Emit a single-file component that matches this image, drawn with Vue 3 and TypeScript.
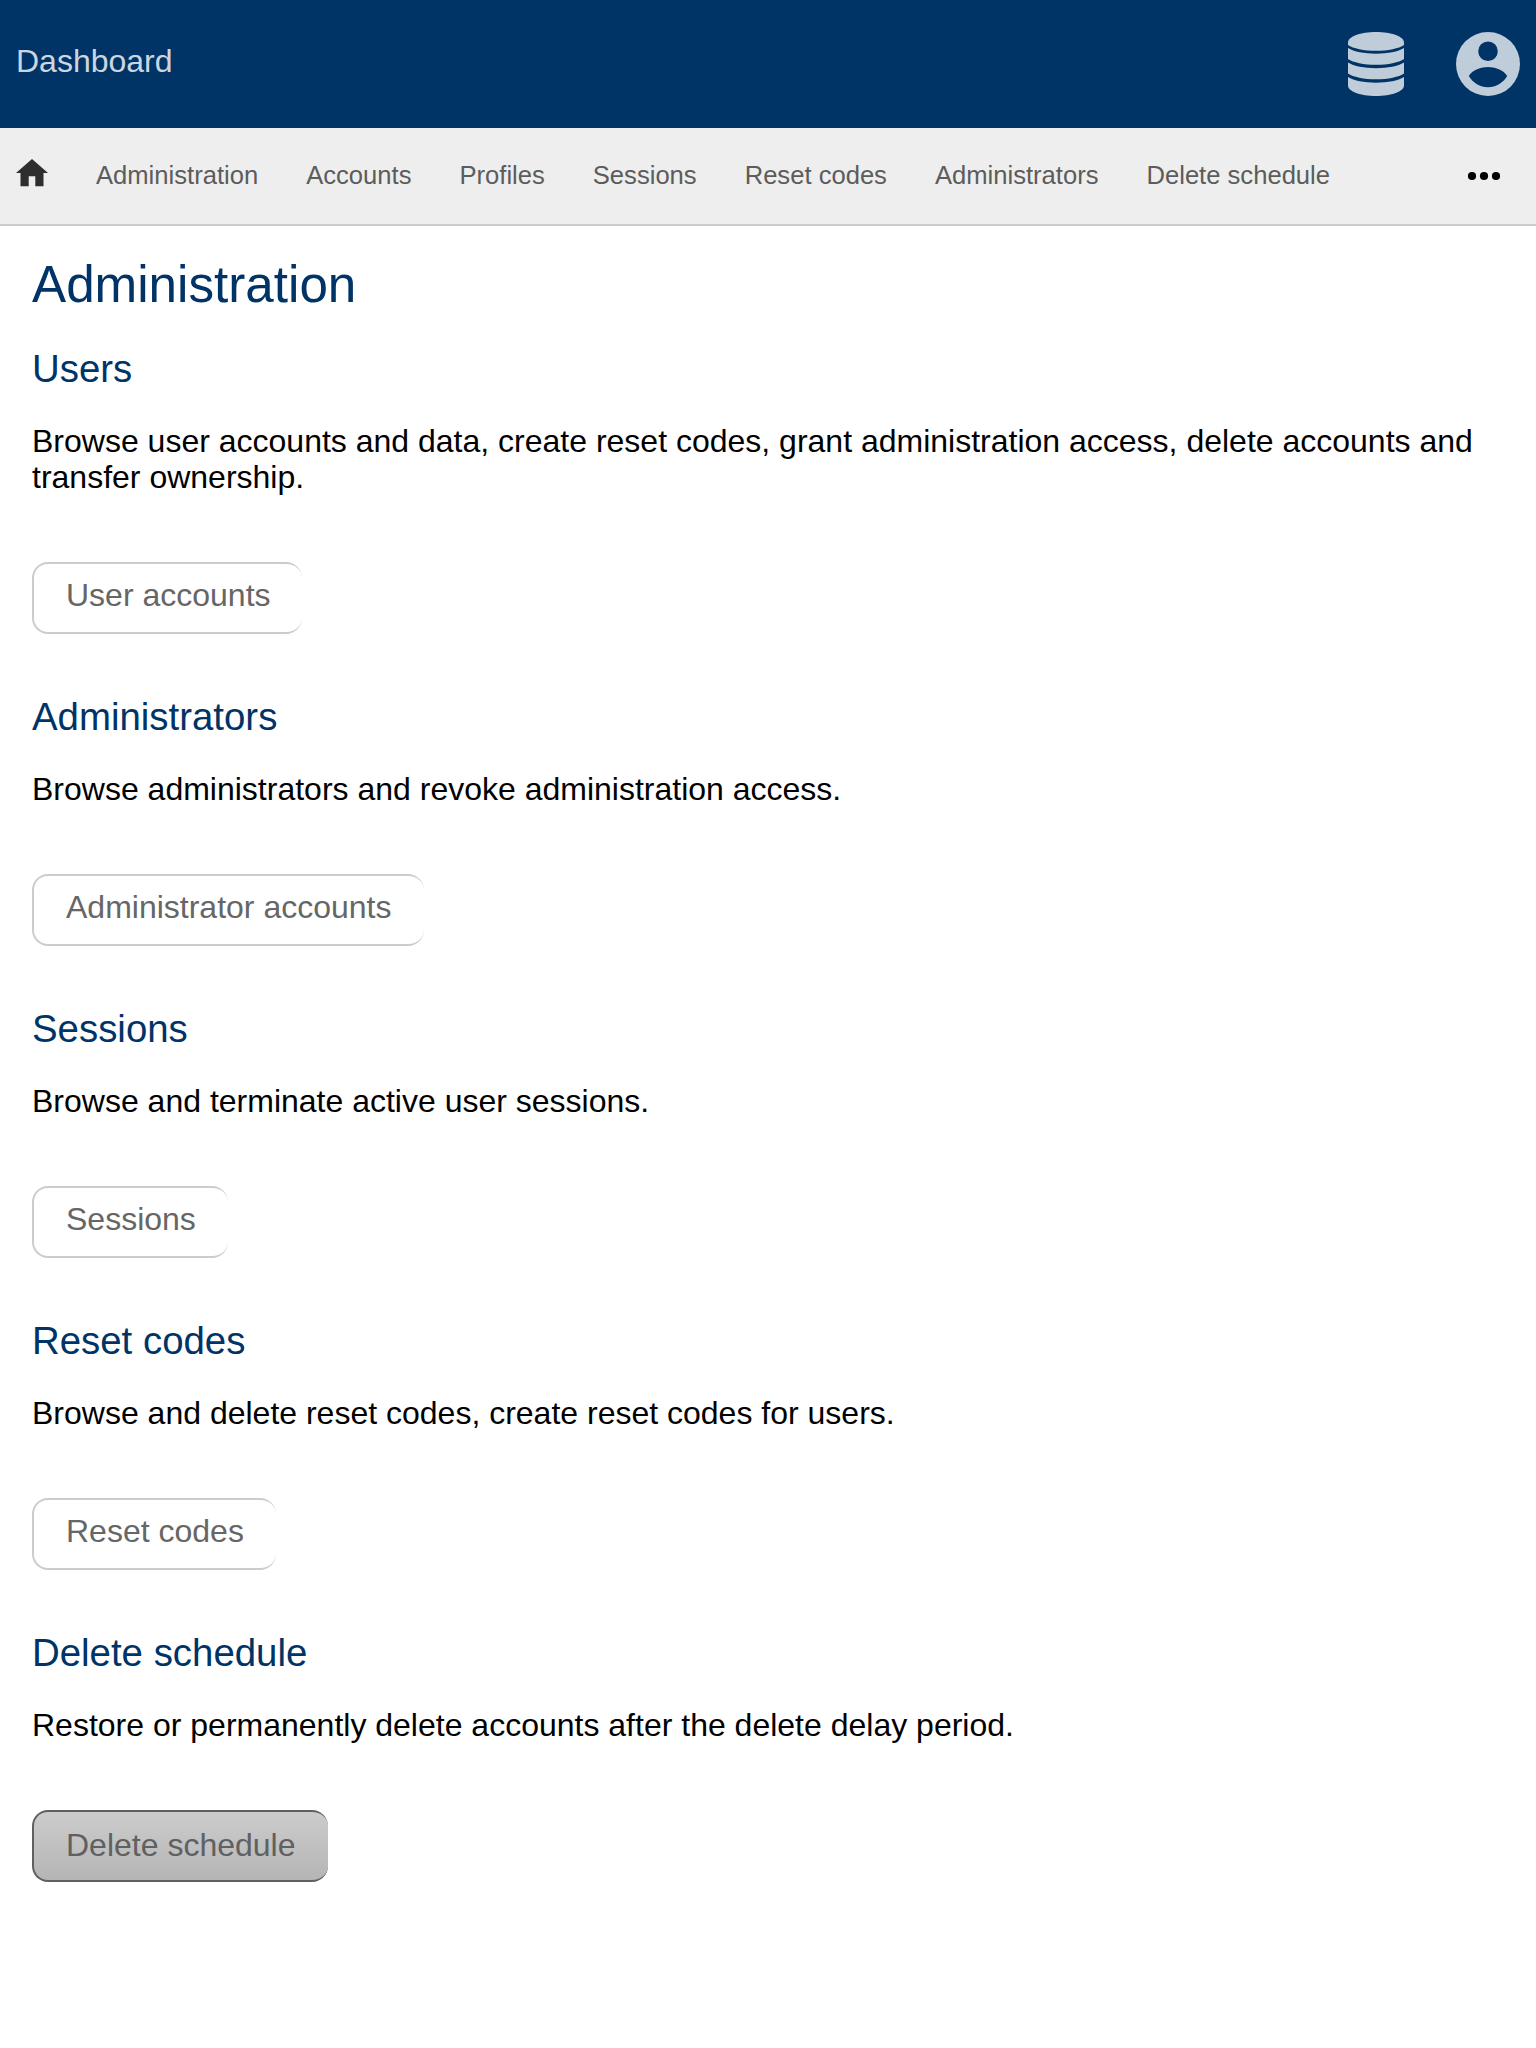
<script setup lang="ts">
interface Section {
  title: string
  text: string
  action: string
  width?: number
  pressed?: boolean
}

const links: string[] = [
  'Administration',
  'Accounts',
  'Profiles',
  'Sessions',
  'Reset codes',
  'Administrators',
  'Delete schedule',
]

const sections: Section[] = [
  {
    title: 'Users',
    text: 'Browse user accounts and data, create reset codes, grant administration access, delete accounts and transfer ownership.',
    action: 'User accounts',
    width: 270,
  },
  {
    title: 'Administrators',
    text: 'Browse administrators and revoke administration access.',
    action: 'Administrator accounts',
    width: 392,
  },
  { title: 'Sessions', text: 'Browse and terminate active user sessions.', action: 'Sessions' },
  { title: 'Reset codes', text: 'Browse and delete reset codes, create reset codes for users.', action: 'Reset codes' },
  {
    title: 'Delete schedule',
    text: 'Restore or permanently delete accounts after the delete delay period.',
    action: 'Delete schedule',
    width: 296,
    pressed: true,
  },
]
</script>

<template>
  <div class="page">
    <header class="header">
      <a class="brand">Dashboard</a>
      <div class="tools">
        <svg class="database" viewBox="0 0 56 64">
          <path d="M0 10.500C0 4.500 12.500 0 28 0S56 4.500 56 10.500V13C51 16.500 40 18.800 28 18.800S5 16.500 0 13Z" />
          <path d="M0 16C6 19.700 16 21.700 28 21.700S50 19.700 56 16V27C51 30.500 40 32.800 28 32.800S5 30.500 0 27Z" />
          <path d="M0 30.500C6 34.200 16 36.200 28 36.200S50 34.200 56 30.500V41.500C51 45 40 47.300 28 47.300S5 45 0 41.500Z" />
          <path d="M0 45C6 48.700 16 50.700 28 50.700S50 48.700 56 45V53.500C56 59.500 43.500 64 28 64S0 59.500 0 53.500Z" />
        </svg>
        <svg class="account" viewBox="0 0 64 64">
          <path
            fill-rule="evenodd"
            d="M32 0a32 32 0 1 1 0 64a32 32 0 1 1 0-64ZM32 9.400a9.800 9.800 0 1 0 0 19.600a9.800 9.800 0 1 0 0-19.600ZM32 35C25.500 35 16 38 12.800 44C17 51 24 55.200 32 55.200S47 51 51.200 44C48 38 38.500 35 32 35Z"
          />
        </svg>
      </div>
    </header>
    <nav class="nav">
      <svg class="home" viewBox="0 0 32 28">
        <path d="M16 0L32 14H27.500V27.300H19.300V17.300H12.700V27.300H4.500V14H0Z" />
      </svg>
      <a v-for="link in links" :key="link" class="link">{{ link }}</a>
      <svg class="more" viewBox="0 0 32 8">
        <circle cx="4" cy="4" r="4.100" />
        <circle cx="16" cy="4" r="4.100" />
        <circle cx="28" cy="4" r="4.100" />
      </svg>
    </nav>
    <main class="content">
      <h1>Administration</h1>
      <section v-for="section in sections" :key="section.title">
        <h2>{{ section.title }}</h2>
        <p>{{ section.text }}</p>
        <a
          class="button"
          :class="{ pressed: section.pressed }"
          :style="{ width: section.width ? `${section.width}px` : undefined }"
        >{{ section.action }}</a>
      </section>
    </main>
  </div>
</template>

<style>
body {
  margin: 0;
  background: #fff;
}
</style>

<style scoped>
.page {
  min-height: 2048px;
  font: 32px/36px 'Liberation Sans', Arial, sans-serif;
  color: #000;
}

.header {
  display: flex;
  justify-content: space-between;
  box-sizing: border-box;
  height: 128px;
  padding: 32px 16px;
  background: #036;
}

.brand {
  margin-top: 11px;
  color: #ccd6e0;
}

.tools {
  display: flex;
  gap: 52px;
  fill: #bfccd9;
}

.database {
  width: 56px;
  height: 64px;
}

.account {
  width: 64px;
  height: 64px;
}

.nav {
  display: flex;
  align-items: center;
  gap: 48px;
  height: 96px;
  padding: 0 36px 0 16px;
  border-bottom: 2px solid #ccc;
  background: #eee;
  font-size: 25.6px;
}

.home {
  width: 32px;
  height: 28px;
  margin-bottom: 7px;
  fill: #2e2e2e;
}

.link {
  margin-bottom: 2px;
  color: #5c5c5c;
  white-space: nowrap;
}

.more {
  width: 32px;
  height: 8px;
  margin-left: auto;
  overflow: visible;
}

.content {
  padding: 30px 32px 0;
}

h1,
h2,
p {
  margin: 0;
  font-weight: 400;
}

h1 {
  margin-bottom: 33px;
  font-size: 51.2px;
  line-height: 58px;
  color: #036;
}

h2 {
  margin-bottom: 32px;
  font-size: 38.4px;
  line-height: 44px;
  color: #036;
}

section {
  margin-bottom: 61px;
}

.button {
  display: block;
  box-sizing: border-box;
  width: fit-content;
  height: 72px;
  margin-top: 67px;
  padding: 13px 0 0 32px;
  padding-right: 32px;
  border: 2px solid #ccc;
  border-right: 0;
  border-radius: 16px;
  color: #666;
  white-space: nowrap;
}

.button.pressed {
  padding-top: 15px;
  border-color: #606060;
  background: linear-gradient(#ccc, #b5b5b5);
  color: #606060;
}
</style>
